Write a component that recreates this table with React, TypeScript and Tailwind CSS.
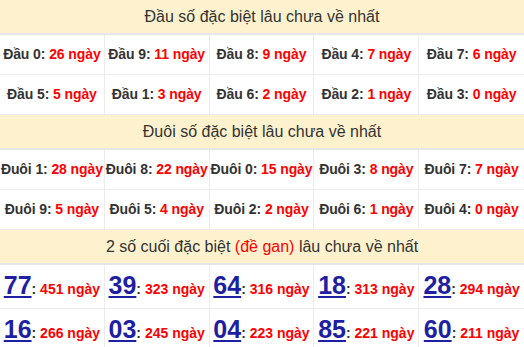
import React from 'react'

type Item = { label: string; days: number }

const dauRows: Item[][] = [
  [
    { label: 'Đầu 0', days: 26 },
    { label: 'Đầu 9', days: 11 },
    { label: 'Đầu 8', days: 9 },
    { label: 'Đầu 4', days: 7 },
    { label: 'Đầu 7', days: 6 },
  ],
  [
    { label: 'Đầu 5', days: 5 },
    { label: 'Đầu 1', days: 3 },
    { label: 'Đầu 6', days: 2 },
    { label: 'Đầu 2', days: 1 },
    { label: 'Đầu 3', days: 0 },
  ],
]

const duoiRows: Item[][] = [
  [
    { label: 'Đuôi 1', days: 28 },
    { label: 'Đuôi 8', days: 22 },
    { label: 'Đuôi 0', days: 15 },
    { label: 'Đuôi 3', days: 8 },
    { label: 'Đuôi 7', days: 7 },
  ],
  [
    { label: 'Đuôi 9', days: 5 },
    { label: 'Đuôi 5', days: 4 },
    { label: 'Đuôi 2', days: 2 },
    { label: 'Đuôi 6', days: 1 },
    { label: 'Đuôi 4', days: 0 },
  ],
]

const ganRows: Item[][] = [
  [
    { label: '77', days: 451 },
    { label: '39', days: 323 },
    { label: '64', days: 316 },
    { label: '18', days: 313 },
    { label: '28', days: 294 },
  ],
  [
    { label: '16', days: 266 },
    { label: '03', days: 245 },
    { label: '04', days: 223 },
    { label: '85', days: 221 },
    { label: '60', days: 211 },
  ],
]

function Header({ children }: { children: React.ReactNode }) {
  return (
    <div className="h-[35px] flex items-center justify-center bg-[#fdf2cd] border-b-2 border-[#e6e6e6] text-[16px] text-[#333]">
      {children}
    </div>
  )
}

function CountRow({ items }: { items: Item[] }) {
  return (
    <div className="grid grid-cols-5 border-b border-[#ececec] last:border-b-0">
      {items.map((it, i) => (
        <div
          key={it.label}
          className={`h-[39px] flex items-center justify-center whitespace-nowrap font-bold text-[14px] tracking-[-0.1px] ${i < 4 ? 'border-r border-[#ececec]' : ''}`}
        >
          <span className="text-[#333]">{it.label}:&nbsp;</span>
          <span className="text-[#ff0000]">{it.days} ngày</span>
        </div>
      ))}
    </div>
  )
}

function GanRow({ items }: { items: Item[] }) {
  return (
    <div className="grid grid-cols-5 border-b border-[#ececec] last:border-b-0">
      {items.map((it, i) => (
        <div
          key={it.label}
          className={`h-[43px] flex items-center justify-center whitespace-nowrap font-bold ${i < 4 ? 'border-r border-[#ececec]' : ''}`}
        >
          <span className="leading-none pb-[2px]">
            <span className="text-[25px] text-[#1f1fa3] underline decoration-2 underline-offset-2">{it.label}</span>
            <span className="text-[14px] text-[#333]">:&nbsp;</span>
            <span className="text-[14px] text-[#ff0000]">{it.days} ngày</span>
          </span>
        </div>
      ))}
    </div>
  )
}

export default function App() {
  return (
    <div className="w-[524px] h-[347px] overflow-hidden bg-white font-['Liberation_Sans',Arial,sans-serif]">
      <Header>Đầu số đặc biệt lâu chưa về nhất</Header>
      {dauRows.map((r, i) => (
        <CountRow key={i} items={r} />
      ))}
      <Header>Đuôi số đặc biệt lâu chưa về nhất</Header>
      {duoiRows.map((r, i) => (
        <CountRow key={i} items={r} />
      ))}
      <Header>
        2 số cuối đặc biệt&nbsp;<span className="text-[#ff0000]">(đề gan)</span>&nbsp;lâu chưa về nhất
      </Header>
      {ganRows.map((r, i) => (
        <GanRow key={i} items={r} />
      ))}
    </div>
  )
}
